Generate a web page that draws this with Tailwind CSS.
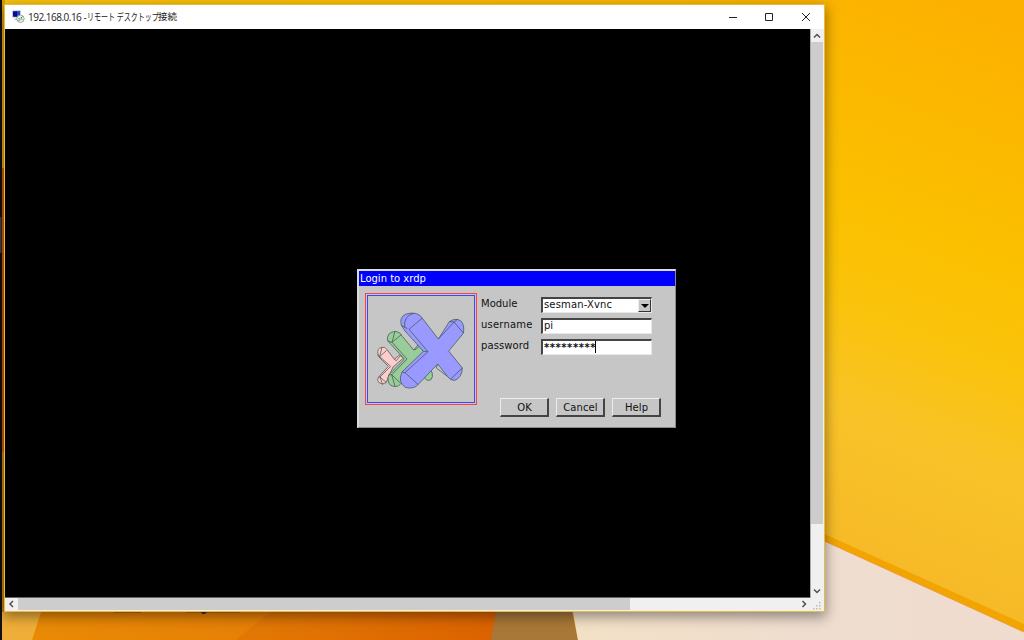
<!DOCTYPE html>
<html lang="ja">
  <head>
    <meta charset="UTF-8" />
    <meta name="viewport" content="width=device-width, initial-scale=1.0" />
    <title>192.168.0.16 - リモート デスクトップ接続</title>
    <script src="https://cdn.jsdelivr.net/npm/@tailwindcss/browser@4"></script>
  </head>
  <body class="relative w-[1024px] h-[640px] overflow-hidden bg-[#fabf08]">
    <!-- Wallpaper -->
    <svg class="absolute inset-0" width="1024" height="640" viewBox="0 0 1024 640">
      <defs>
        <linearGradient id="sky" gradientUnits="userSpaceOnUse" x1="1040" y1="20" x2="830" y2="560">
          <stop offset="0" stop-color="#fcb000" />
          <stop offset=".42" stop-color="#fbc000" />
          <stop offset=".58" stop-color="#fac30c" />
          <stop offset=".75" stop-color="#f9c328" />
          <stop offset="1" stop-color="#f6b928" />
        </linearGradient>
        <linearGradient id="orange" x1="0" x2="1" y1="0" y2="0">
          <stop offset="0" stop-color="#e98a05" />
          <stop offset=".5" stop-color="#e68006" />
          <stop offset="1" stop-color="#dd6400" />
        </linearGradient>
        <linearGradient id="sand" x1="0" x2="1" y1="0" y2="0">
          <stop offset="0" stop-color="#f3e1c6" />
          <stop offset=".5" stop-color="#efddcf" />
          <stop offset="1" stop-color="#efdccf" />
        </linearGradient>
      </defs>
      <rect width="1024" height="640" fill="url(#sky)" />
      <path d="M0 600H500V640H0z" fill="#efae39" />
      <path d="M43 606H500L492 640H32z" fill="url(#orange)" />
      <path d="M270 612L236 640H492L497 612z" fill="#d95d00" fill-opacity=".25" />
      <path d="M498 600H570L578 640H491z" fill="#a87838" />
      <path d="M571 600L820 534L1024 629V640H578z" fill="url(#sand)" />
      <path d="M820 532L1024 624V632L820 539z" fill="#f2a500" />
      <path d="M820 539L1024 632" stroke="#f29a35" stroke-width="1" />
      <path d="M0 0H2V640H0z" fill="#111" />
      <path d="M0 217H1.5V253H0z" fill="#444" />
      <path d="M2 0H5V168H2z" fill="#dfa000" />
      <path d="M2 168H5V452H2z" fill="#d25a00" />
      <path d="M2 452H5V612H2z" fill="#cb8009" />
      <path d="M114 612H141M186 612H240" stroke="#513000" stroke-opacity=".55" />
      <path d="M201 612h6l-2 2h-3z" fill="#3d3528" />
    </svg>

    <!-- Remote desktop window -->
    <div class="absolute left-1 top-1 w-[821px] h-[608px] flex flex-col border border-[#ebba45] bg-white shadow-[0_4px_12px_1px_rgba(0,0,0,0.4)]">
      <div class="h-6 shrink-0 flex items-center pl-[7px] pb-px">
        <svg class="shrink-0" width="13" height="13" viewBox="0 0 13 13">
          <path d="M0 .5L9 0V8L0 7.500z" fill="#c2cde0" />
          <path d="M1 1.500L8 1V7L1 6.500z" fill="#2a45c4" />
          <path d="M1 1.500L5 1.200V6.700L1 6.500z" fill="#06108b" />
          <path d="M3 8.500H7V11L2 9.500z" fill="#b9c0cb" />
          <circle cx="8.500" cy="8.800" r="3.700" fill="#e9eee8" stroke="#8c9690" stroke-width=".8" />
          <path d="M6.500 8L8 9.500L6.500 11M10.500 6.500L8.800 8.200L10.500 9.800" fill="none" stroke="#339a3f" stroke-width="1" />
        </svg>
        <div class="ml-[3px] flex items-center text-[10px] leading-[22px] whitespace-pre text-[#222] font-['Open_Sans','Noto_Sans_CJK_JP',sans-serif]">
          <span class="w-[59px] tracking-[-0.5px]">192.168.0.16 - </span>
          <span class="w-[71px]"><span class="inline-block origin-left scale-x-[0.7]">リモート デスクトップ</span></span>
          <span class="text-[9.5px]">接続</span>
        </div>
        <svg class="ml-auto mr-[12px]" width="84" height="12" viewBox="0 0 84 12" fill="none" stroke="#222" stroke-width="1">
          <path d="M1 6.500H9M37.500 2.500H44.500V9.500H37.500zM74 2L82 10M82 2L74 10" />
        </svg>
      </div>

      <div class="flex-1 min-h-0 flex">
        <!-- Session area -->
        <div class="relative w-[805px] bg-black border-b border-[#666]">
          <!-- xrdp login dialog -->
          <div class="absolute left-[352px] top-[240px] w-[319px] h-[159px] bg-[#c6c6c6] border-t-2 border-l-2 border-r border-b border-t-[#dcdcdc] border-l-[#dcdcdc] border-r-[#8b8b8b] border-b-[#8b8b8b] text-[10px] text-[#111] font-['DejaVu_Sans',sans-serif]">
            <div class="h-[15px] pl-px bg-[#0000ff] text-white leading-[15px]">Login to xrdp</div>
            <div class="flex pl-1.5 pt-[7px]">
              <div class="w-[112px] h-[112px] shrink-0 border border-[#ff4040] p-px">
                <div class="h-full border border-[#4444ff] pl-[2px] pt-1">
                  <svg width="100" height="95" viewBox="0 0 300 285" stroke="#3f5554" stroke-width="2.2" stroke-linejoin="round">
                    <g fill="#ffcccc">
                      <path d="M24 163Q20 145 36 142Q45 139 51 149L73 178L88 165L100 174L69 201L48 248Q38 256 27 248Q20 242 25 232L55 199L25 169z" />
                      <path d="M29 170L50 151M29 170L62 199L30 231L49 248M24 163L29 170M25 232L30 231M36 142L29 170M30 231L38 254M73 178L79 182L91 167" fill="none" />
                    </g>
                    <g fill="#99cc99">
                      <path d="M163 229Q166 245 182 240Q191 231 186 216L174 205z" />
                      <path d="M53 123Q48 96 77 94Q91 96 97 109L131 150L148 130L176 151L92 252Q80 265 62 256Q50 245 56 225L103 177L60 130z" />
                      <path d="M66 127L94 104M66 127L111 177L65 224L91 249M53 123L66 127M56 225L65 224M75 94L66 127M65 224L75 259M131 150L138 148L151 135" fill="none" />
                    </g>
                    <g fill="#9999ff">
                      <path d="M94 76Q87 51 108 42Q144 32 158 56L205 117L238 65Q255 53 272 62Q285 75 280 100L236 153L277 204Q276 232 255 241Q242 243 231 228L203 192L145 253Q131 269 106 262Q82 247 96 216L160 154L105 93z" />
                      <path d="M117 88L157 54M117 88L174 155L105 218L145 254M94 76L112 86M96 216L105 218M131 40Q100 48 104 82M252 66L280 99M252 66L205 117M238 65L252 66L264 57M242 237L277 204M203 192L199 204L231 228M160 154L174 155" fill="none" />
                    </g>
                  </svg>
                </div>
              </div>

              <div class="ml-1 w-[180px] flex flex-col">
                <div class="h-[21px] flex items-start pt-1">
                  <label class="w-[60px] leading-[13px]">Module</label>
                  <div class="w-[111px] h-4 flex bg-white border-t-2 border-l-2 border-r border-b border-t-[#444] border-l-[#444] border-r-[#e8e8e8] border-b-[#e8e8e8]">
                    <span class="flex-1 pl-px leading-3 tracking-[0.15px]">sesman-Xvnc</span>
                    <div class="w-[13px] h-[13px] flex items-center justify-center bg-[#c6c6c6] border border-t-[#eee] border-l-[#eee] border-r-[#333] border-b-[#333]">
                      <svg width="8" height="4" viewBox="0 0 8 4"><path d="M0 0H8L4 4z" fill="#000" /></svg>
                    </div>
                  </div>
                </div>
                <div class="h-[21px] flex items-start pt-[3px]">
                  <label class="w-[60px] leading-[15px] tracking-[0.2px]">username</label>
                  <div class="w-[111px] h-4 mt-px pl-px bg-white border-t-2 border-l-2 border-r border-b border-t-[#444] border-l-[#444] border-r-[#e8e8e8] border-b-[#e8e8e8] leading-3">pi</div>
                </div>
                <div class="h-[21px] flex items-start pt-[3px]">
                  <label class="w-[60px] leading-[15px] tracking-[0.1px]">password</label>
                  <div class="w-[111px] h-4 mt-px pl-px flex bg-white border-t-2 border-l-2 border-r border-b border-t-[#444] border-l-[#444] border-r-[#e8e8e8] border-b-[#e8e8e8] leading-[13px]">
                    <span class="tracking-[0.55px] w-[51px] font-bold">*********</span>
                    <span class="w-px h-3 bg-black"></span>
                  </div>
                </div>
                <div class="flex gap-[7px] mt-[42px] ml-[19px] text-center leading-[17px]">
                  <button class="w-[49px] h-[19px] pl-px tracking-[0.1px] border-t border-l border-r-2 border-b-2 border-t-[#eee] border-l-[#eee] border-r-[#444] border-b-[#444]">OK</button>
                  <button class="w-[49px] h-[19px] pl-px tracking-[0.1px] border-t border-l border-r-2 border-b-2 border-t-[#eee] border-l-[#eee] border-r-[#444] border-b-[#444]">Cancel</button>
                  <button class="w-[49px] h-[19px] pl-px tracking-[0.1px] border-t border-l border-r-2 border-b-2 border-t-[#eee] border-l-[#eee] border-r-[#444] border-b-[#444]">Help</button>
                </div>
              </div>
            </div>
          </div>
        </div>

        <!-- Vertical scrollbar -->
        <div class="flex-1 flex flex-col bg-[#f0f0f0] border-l border-[#aaa]">
          <svg width="13" height="13" viewBox="0 0 13 13" fill="none" stroke="#505050" stroke-width="1.5"><path d="M3 8.500L6 5.500L9 8.500" /></svg>
          <div class="h-[482px] mr-px bg-[#cdcdcd]"></div>
          <svg class="mt-auto" width="13" height="13" viewBox="0 0 13 13" fill="none" stroke="#505050" stroke-width="1.5"><path d="M3 4.500L6 7.500L9 4.500" /></svg>
        </div>
      </div>

      <!-- Horizontal scrollbar -->
      <div class="h-[13px] shrink-0 flex bg-[#f0f0f0]">
        <svg width="13" height="13" viewBox="0 0 13 13" fill="none" stroke="#505050" stroke-width="1.5"><path d="M8 3L5 6L8 9" /></svg>
        <div class="w-[612px] mb-px bg-[#cdcdcd]"></div>
        <svg class="ml-auto" width="27" height="13" viewBox="0 0 27 13">
          <path d="M5.500 3L8.500 6L5.500 9" fill="none" stroke="#505050" stroke-width="1.500" />
          <path d="M22 4h1.500v1.500H22zM19 7h1.500v1.500H19zM22 7h1.500v1.500H22zM16 10h1.500v1.500H16zM19 10h1.500v1.500H19zM22 10h1.500v1.500H22z" fill="#bbb" />
        </svg>
      </div>
    </div>
  </body>
</html>
